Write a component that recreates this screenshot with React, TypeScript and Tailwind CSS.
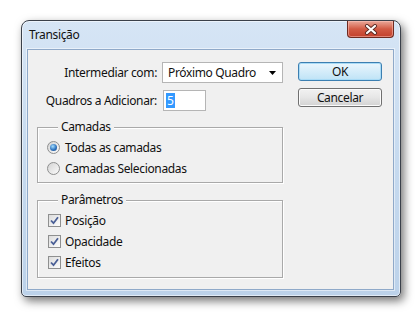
import React from 'react';

function Radio({ checked, label }: { checked?: boolean; label: string }) {
  return (
    <div className="flex h-[21px] items-center">
      <span className="ml-[9px] flex h-[13px] w-[13px] items-center justify-center rounded-full border border-[#8e8f8f] bg-gradient-to-br from-[#d4d4d4] to-[#fbfbfb]">
        {checked && (
          <span className="h-[7px] w-[7px] rounded-full bg-[radial-gradient(circle_at_40%_35%,#a6e0ff,#2f74c0_55%,#16447f)]" />
        )}
      </span>
      <span className="ml-[5px]">{label}</span>
    </div>
  );
}

function Check({ label }: { label: string }) {
  return (
    <div className="flex h-[21px] items-center">
      <span className="ml-[10px] flex h-[13px] w-[13px] items-center justify-center border border-[#8e8f8f] bg-gradient-to-br from-[#dcdcdc] to-[#fdfdfd]">
        <svg width="9" height="9" viewBox="0 0 9 9">
          <path d="M1 4.5 L3.5 7.2 L8 1.2" fill="none" stroke="#4a5f96" strokeWidth="1.8" />
        </svg>
      </span>
      <span className="ml-[4px]">{label}</span>
    </div>
  );
}

function Group({ title, children }: { title: string; children: React.ReactNode }) {
  return (
    <div className="flex flex-col border border-[#a9a9a9] shadow-[1px_1px_0_#ffffff,inset_1px_1px_0_#ffffff]">
      <span className="-mt-[9px] ml-[20px] h-[16px] self-start bg-[#f0f0f0] px-[3px] leading-[16px]">{title}</span>
      {children}
    </div>
  );
}

export default function App() {
  return (
    <div className="h-[317px] w-[420px] bg-white pl-[21px] pt-[20px] font-['Noto_Sans','Open_Sans',sans-serif] text-[12px] tracking-[-0.35px] text-[#111]">
      <div className="flex h-[277px] w-[380px] flex-col rounded-t-[8px] rounded-b-[5px] border border-[#3a404a] bg-gradient-to-b from-[#d6e5f5] via-[#c6daef] to-[#bcd2ea] pb-[6px] pl-[5px] pr-[6px] shadow-[3px_4px_10px_rgba(0,0,0,0.55),inset_0_0_0_1px_rgba(255,255,255,0.55)]">
        {/* Title bar */}
        <div className="flex h-[28px] items-start">
          <span className="ml-[2px] mt-[6px] leading-[16px]">Transição</span>
          <div className="ml-auto flex h-[17px] w-[47px] items-center justify-center rounded-b-[4px] border border-t-0 border-[#6e2a20] bg-gradient-to-b from-[#e9a89a] via-[#d25a44] to-[#c2402c] shadow-[inset_0_0_0_1px_rgba(255,200,190,0.5)]">
            <svg width="14" height="11" viewBox="0 0 14 11">
              <path d="M3 2 L11 9 M11 2 L3 9" stroke="#5a2a24" strokeWidth="4" strokeLinecap="round" />
              <path d="M3 2 L11 9 M11 2 L3 9" stroke="#ffffff" strokeWidth="2.2" strokeLinecap="round" />
            </svg>
          </div>
        </div>

        {/* Client area */}
        <div className="flex flex-1 border border-[#8fa9c9] bg-[#f0f0f0] pl-[9px] pt-[12px] shadow-[0_0_0_1px_rgba(255,255,255,0.5)]">
          <div className="flex w-[246px] flex-col">
            <div className="flex h-[21px] items-center">
              <span className="w-[120px] text-right">Intermediar com:</span>
              <div className="ml-[5px] flex h-[21px] w-[121px] items-center border border-[#b5b5b5] bg-white pl-[5px] pr-[6px]">
                <span>Próximo Quadro</span>
                <svg className="ml-auto" width="7" height="4" viewBox="0 0 7 4">
                  <path d="M0 0 H7 L3.5 4 Z" fill="#000" />
                </svg>
              </div>
            </div>
            <div className="mt-[7px] flex h-[21px] items-center">
              <span className="w-[120px] text-right">Quadros a Adicionar:</span>
              <div className="ml-[6px] flex h-[21px] w-[43px] items-center border border-[#b5b5b5] bg-white pl-[2px]">
                <span className="flex h-[15px] items-center bg-[#3399ff] px-[1px] text-white">5</span>
              </div>
            </div>

            <div className="mt-[16px]">
              <Group title="Camadas">
                <div className="mt-[2px] pb-[3px]">
                  <Radio checked label="Todas as camadas" />
                  <Radio label="Camadas Selecionadas" />
                </div>
              </Group>
            </div>

            <div className="mt-[17px]">
              <Group title="Parâmetros">
                <div className="mt-[2px] pb-[4px]">
                  <Check label="Posição" />
                  <Check label="Opacidade" />
                  <Check label="Efeitos" />
                </div>
              </Group>
            </div>
          </div>

          <div className="ml-[15px] flex w-[84px] flex-col">
            <button className="flex h-[19px] items-center justify-center rounded-[3px] border border-[#3c7fb1] bg-gradient-to-b from-[#eaf6fd] to-[#bfe3f6] shadow-[inset_0_0_0_1px_#a9dbf6]">
              OK
            </button>
            <button className="mt-[7px] flex h-[19px] items-center justify-center rounded-[3px] border border-[#707070] bg-gradient-to-b from-[#f2f2f2] via-[#e6e6e6] to-[#d2d2d2] shadow-[inset_0_0_0_1px_#fbfbfb]">
              Cancelar
            </button>
          </div>
        </div>
      </div>
    </div>
  );
}
